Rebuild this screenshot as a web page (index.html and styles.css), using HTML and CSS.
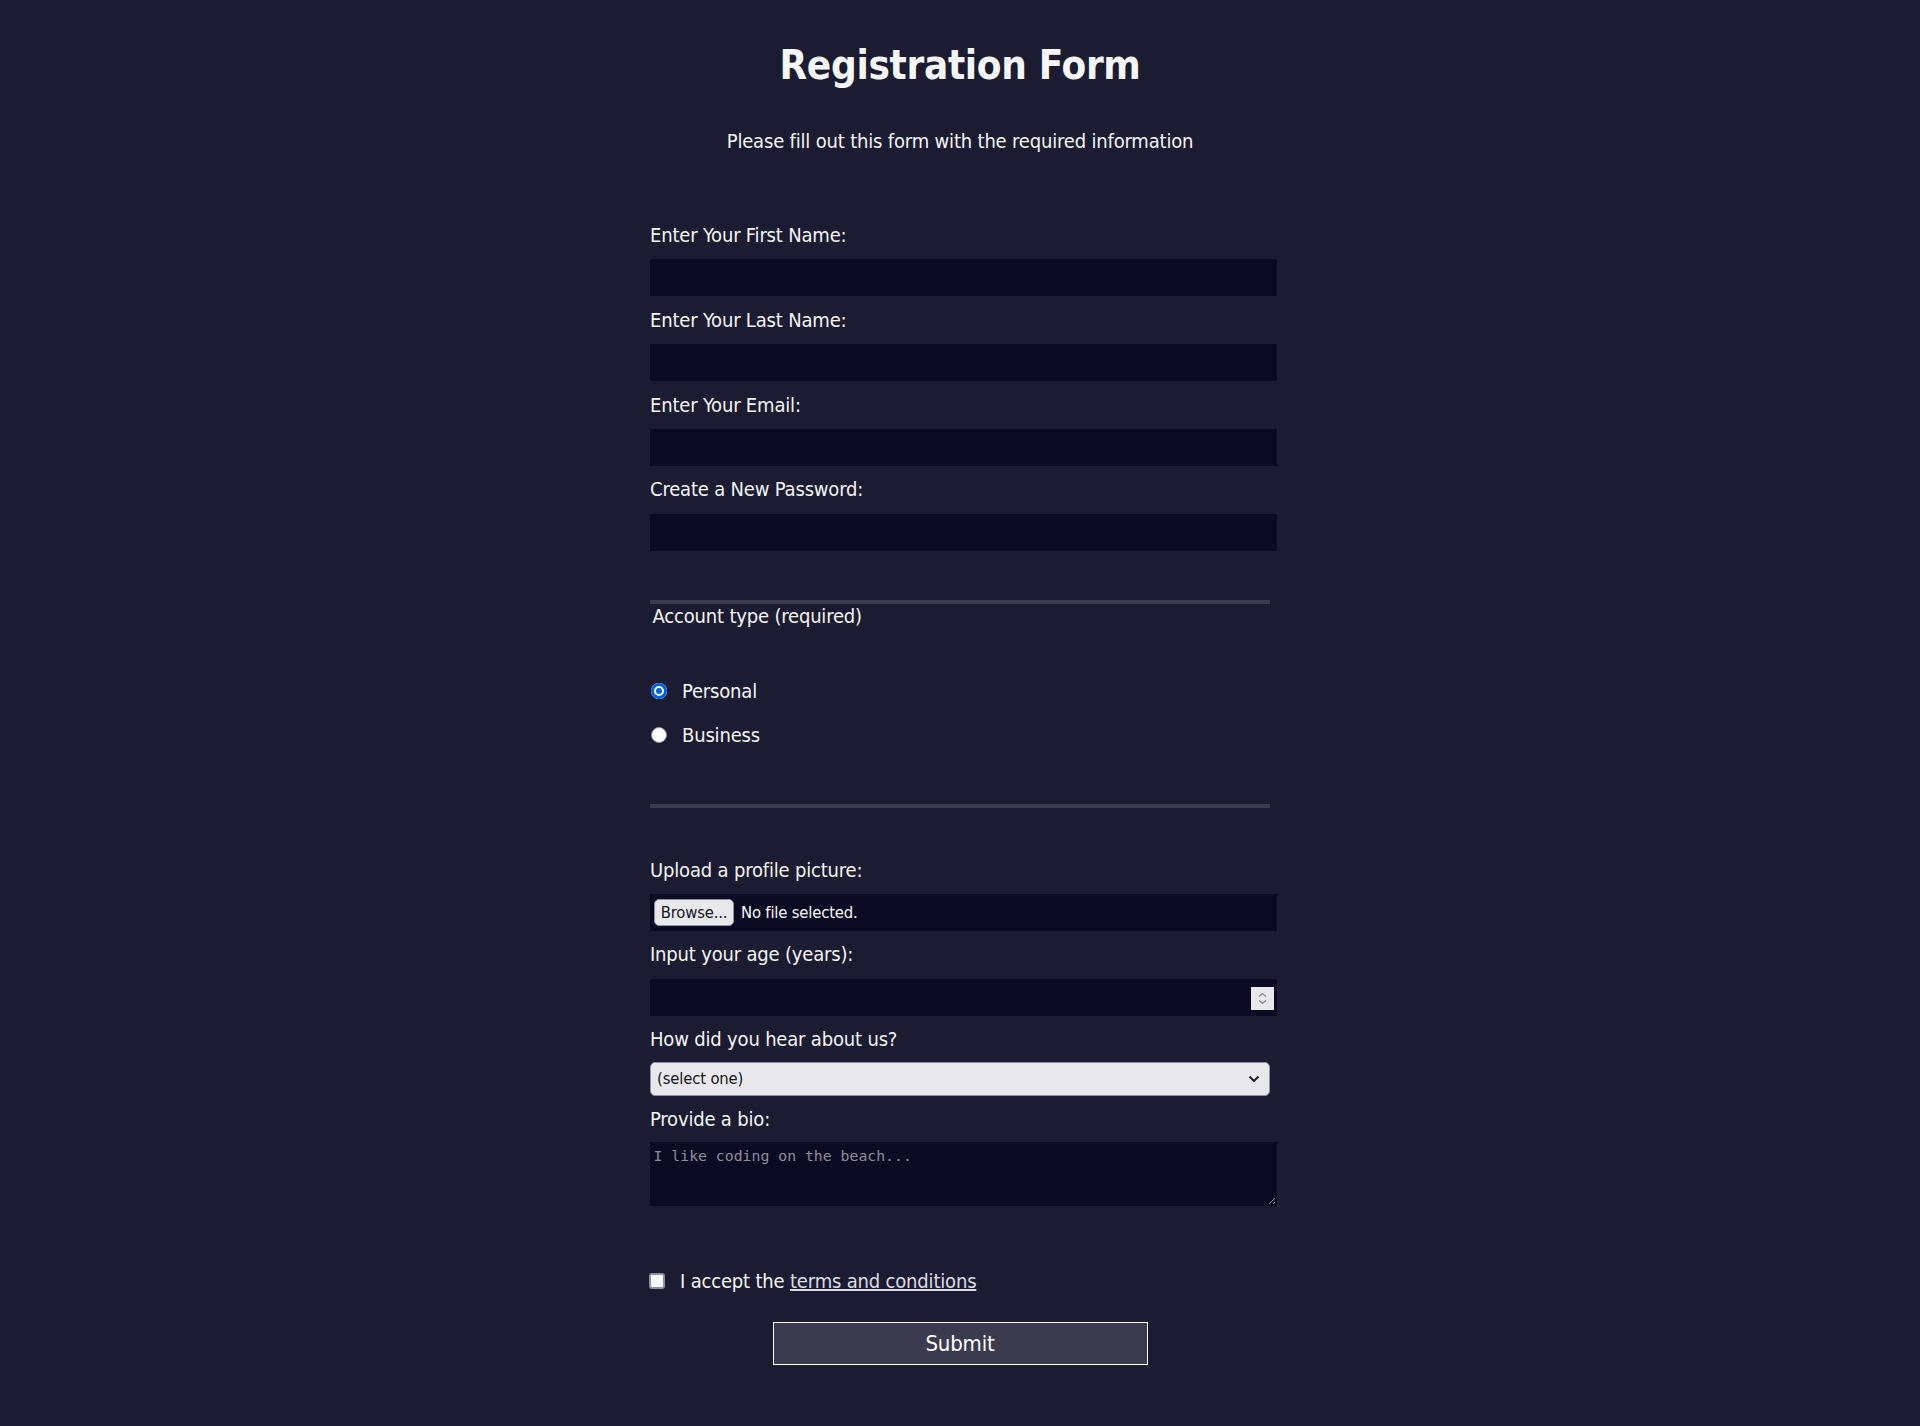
FILE: index.html
```html
<!DOCTYPE html>
<html lang="en">
<head>
<meta charset="utf-8">
<title>Registration Form</title>
<link rel="stylesheet" href="styles.css">
</head>
<body>
<h1 class="title">Registration Form</h1>
<p class="subtitle">Please fill out this form with the required information</p>
<form class="reg-form" onsubmit="return false">
  <fieldset class="group group-first">
    <label class="field">Enter Your First Name:
      <input class="text-input" type="text" name="first-name">
    </label>
    <label class="field">Enter Your Last Name:
      <input class="text-input" type="text" name="last-name">
    </label>
    <label class="field">Enter Your Email:
      <input class="text-input" type="email" name="email">
    </label>
    <label class="field">Create a New Password:
      <input class="text-input" type="password" name="password">
    </label>
  </fieldset>
  <fieldset class="group group-radios">
    <legend class="legend">Account type (required)</legend>
    <label class="option"><input class="radio" type="radio" name="account-type" checked><span>Personal</span></label>
    <label class="option"><input class="radio" type="radio" name="account-type"><span>Business</span></label>
  </fieldset>
  <fieldset class="group group-last">
    <label class="field">Upload a profile picture:
      <span class="file-box"><span class="browse-btn">Browse...</span><span class="file-text">No file selected.</span></span>
    </label>
    <label class="field field-age">Input your age (years):
      <span class="number-wrap">
        <input class="text-input number-input" type="number" name="age" min="13" max="120">
        <span class="spinner"><svg width="23" height="23" viewBox="0 0 23 23"><path d="M8 9.5 L11.5 6.5 L15 9.5" fill="none" stroke="#8a8a93" stroke-width="1.2"/><path d="M8 13.5 L11.5 16.5 L15 13.5" fill="none" stroke="#8a8a93" stroke-width="1.2"/></svg></span>
      </span>
    </label>
    <label class="field">How did you hear about us?
      <span class="select-wrap">
        <select class="select" name="referrer">
          <option value="">(select one)</option>
          <option value="1">freeCodeCamp News</option>
          <option value="2">freeCodeCamp YouTube Channel</option>
          <option value="3">freeCodeCamp Forum</option>
          <option value="4">Other</option>
        </select>
        <svg class="chevron" width="12" height="8" viewBox="0 0 12 8"><path d="M1.5 1.5 L6 6 L10.5 1.5" fill="none" stroke="#1b1b1f" stroke-width="1.8"/></svg>
      </span>
    </label>
    <label class="field">Provide a bio:
      <textarea class="bio" rows="3" cols="30" placeholder="I like coding on the beach..."></textarea>
    </label>
  </fieldset>
  <label class="option terms"><input class="checkbox" type="checkbox" name="terms"><span>I accept the <a class="link" href="#">terms and conditions</a></span></label>
  <input class="submit" type="submit" value="Submit">
</form>
</body>
</html>
```
FILE: styles.css
```css
html, body {
  margin: 0;
  background-color: #1b1b32;
}
body {
  color: #f5f6f7;
  font-family: "DejaVu Sans Condensed", "DejaVu Sans", sans-serif;
  font-size: 20px;
  letter-spacing: -0.18px;
  min-height: 1426px;
}
.title {
  font-size: 40px;
  line-height: 48px;
  letter-spacing: -0.3px;
  margin: 41px auto 40px;
  text-align: center;
}
.subtitle {
  line-height: 24px;
  margin: 20px auto;
  text-align: center;
}
.reg-form {
  width: 625px;
  margin: 0 auto;
  padding-bottom: 40px;
}
.group {
  border: none;
  border-bottom: 4px solid #3b3b4f;
  margin: 0 2.5px;
  padding: 38.7px 0;
  min-width: 0;
}
.group-first {
  padding-bottom: 37.5px;
}
.group-radios {
  padding-top: 40px;
  padding-bottom: 41.2px;
}
.group-last {
  border-bottom: none;
}
.legend {
  padding: 0 2.5px;
  line-height: 24px;
  margin-bottom: -3.3px;
}
.field {
  display: block;
  margin: 11.3px 0;
  line-height: 24px;
}
.field-age {
  margin-bottom: 10px;
}
.text-input {
  display: block;
  box-sizing: border-box;
  width: calc(100% + 7px);
  height: 37px;
  margin: 12.5px 0 0 0;
  background-color: #0a0a23;
  border: 1px solid #0a0a23;
  color: #ffffff;
  font-size: 16.5px;
  padding: 1px 2.5px;
  outline: none;
}
.number-wrap {
  position: relative;
  display: block;
}
.number-input {
  -moz-appearance: textfield;
}
.number-input::-webkit-inner-spin-button,
.number-input::-webkit-outer-spin-button {
  -webkit-appearance: none;
  margin: 0;
}
.spinner {
  position: absolute;
  right: -3.5px;
  top: 8px;
  width: 23px;
  height: 23px;
  background: #e9e9ed;
  display: flex;
}
.file-box {
  display: flex;
  align-items: center;
  box-sizing: border-box;
  width: calc(100% + 7px);
  height: 37px;
  margin-top: 12.5px;
  background-color: #0a0a23;
  padding: 0 4px;
  font-size: 16.5px;
  line-height: 20px;
}
.browse-btn {
  box-sizing: border-box;
  display: flex;
  align-items: center;
  justify-content: center;
  width: 80px;
  height: 27px;
  background: #e9e9ed;
  color: #15141a;
  border: 1px solid #8f8f9d;
  border-radius: 5px;
}
.file-text {
  margin-left: 7px;
  color: #fbfbfe;
}
.select-wrap {
  position: relative;
  display: block;
  margin-top: 11px;
}
.select {
  display: block;
  box-sizing: border-box;
  width: 100%;
  height: 33.5px;
  margin: 0;
  -webkit-appearance: none;
  appearance: none;
  background: #e9e9ed;
  color: #15141a;
  border: 1px solid #8f8f9d;
  border-radius: 5px;
  padding: 0 6px;
  font-family: inherit;
  font-size: 16.5px;
  letter-spacing: -0.15px;
}
.chevron {
  position: absolute;
  right: 10px;
  top: 13px;
  pointer-events: none;
}
.bio {
  display: block;
  box-sizing: border-box;
  width: calc(100% + 7px);
  height: 64px;
  margin: 11.5px 0 0 0;
  background-color: #0a0a23;
  border: 1px solid #0a0a23;
  color: #ffffff;
  padding: 2.5px;
  font-family: "DejaVu Sans Mono", monospace;
  font-size: 14.8px;
  letter-spacing: 0;
  line-height: 19px;
  outline: none;
}
.bio::placeholder {
  color: #8d8d97;
}
.option {
  display: flex;
  align-items: center;
  height: 34px;
  margin: 10px 0;
  line-height: 24px;
}
.terms {
  margin-top: 7.6px;
}
.radio {
  -webkit-appearance: none;
  appearance: none;
  box-sizing: border-box;
  width: 16px;
  height: 16px;
  margin: 0 15.5px 0 0.5px;
  border-radius: 50%;
  background: #ffffff;
  border: 1.5px solid #8f8f9d;
}
.radio:checked {
  border: none;
  background: #0060df;
  box-shadow: inset 0 0 0 3px #0060df, inset 0 0 0 5px #ffffff;
}
.checkbox {
  -webkit-appearance: none;
  appearance: none;
  box-sizing: border-box;
  width: 16px;
  height: 16px;
  margin: 0 15px 0 1.5px;
  border-radius: 3px;
  background: #ffffff;
  border: 2px solid #8f8f9d;
}
.link {
  color: #dfdfe2;
}
.submit {
  display: block;
  box-sizing: border-box;
  width: 375px;
  height: 43.5px;
  margin: 23.5px auto 22px;
  font-family: inherit;
  font-size: 22px;
  letter-spacing: -0.2px;
  background-color: #3b3b4f;
  border: 1.5px solid #ffffff;
  color: #ffffff;
}
```
